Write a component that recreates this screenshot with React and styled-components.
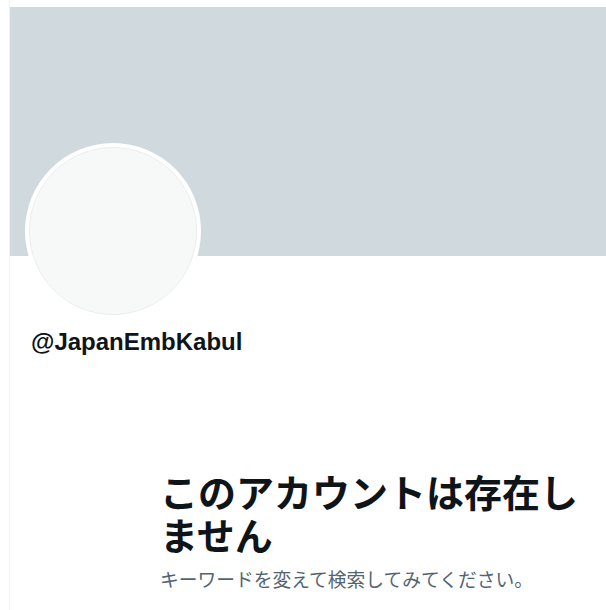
import React from 'react';
import styled, { createGlobalStyle } from 'styled-components';

const GlobalStyle = createGlobalStyle`
  html, body {
    margin: 0;
    padding: 0;
    background: #ffffff;
  }
  body {
    font-family: "Liberation Sans", "Noto Sans CJK JP", sans-serif;
    color: #0f1419;
  }
`;

const Column = styled.main`
  margin-left: 9px;
  min-height: 610px;
  padding-top: 7px;
  border-left: 1px solid #eff3f4;
  box-sizing: border-box;
  display: flex;
  flex-direction: column;
`;

const Banner = styled.div`
  height: 249px;
  background: #cfd9de;
`;

const Profile = styled.section`
  padding: 0 15px;
  display: flex;
  flex-direction: column;
  align-items: flex-start;
`;

const Avatar = styled.div`
  width: 176px;
  height: 176px;
  margin-top: -113px;
  border-radius: 50%;
  background: #ffffff;
  padding: 4px;
  box-sizing: border-box;
  display: flex;
`;

const AvatarInner = styled.div`
  flex: 1;
  border-radius: 50%;
  background: #f7f9f9;
  border: 1px solid #ebeeef;
`;

const Handle = styled.div`
  margin: 8px 0 0 6px;
  font-family: "Liberation Sans", sans-serif;
  font-weight: 700;
  font-size: 24px;
  line-height: 30px;
`;

const Empty = styled.section`
  margin: 112px 0 0 150px;
  width: 430px;
  display: flex;
  flex-direction: column;
  gap: 12px;
`;

const Title = styled.h1`
  margin: 0;
  font-family: "Noto Sans CJK JP", sans-serif;
  font-weight: 700;
  font-size: 38px;
  line-height: 43px;
  color: #0f1419;
`;

const Subtitle = styled.p`
  margin: 0;
  font-family: "Noto Sans CJK JP", sans-serif;
  font-size: 18.75px;
  line-height: 24px;
  color: #536471;
`;

export default function App() {
  return (
    <>
      <GlobalStyle />
      <Column>
        <Banner />
        <Profile>
          <Avatar>
            <AvatarInner />
          </Avatar>
          <Handle>@JapanEmbKabul</Handle>
        </Profile>
        <Empty>
          <Title>このアカウントは存在しません</Title>
          <Subtitle>キーワードを変えて検索してみてください。</Subtitle>
        </Empty>
      </Column>
    </>
  );
}
